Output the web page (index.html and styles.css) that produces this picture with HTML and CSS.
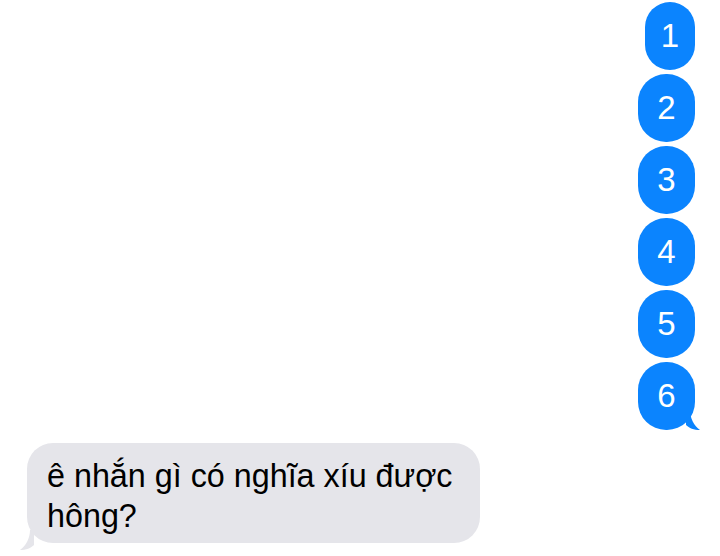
FILE: index.html
```html
<!DOCTYPE html>
<html lang="vi">
<head>
    <meta charset="UTF-8">
    <meta name="viewport" content="width=device-width, initial-scale=1.0">
    <title>Tin nhắn</title>
    <link rel="stylesheet" href="styles.css">
</head>
<body>

<div class="thread">
    <!-- Sent messages -->
    <div class="sent">
        <div class="bubble out narrow">1</div>
        <div class="bubble out">2</div>
        <div class="bubble out">3</div>
        <div class="bubble out">4</div>
        <div class="bubble out">5</div>
        <div class="bubble out last">
            6
            <svg class="tail tail-out" width="16" height="20" viewBox="0 0 16 20">
                <path d="M0 0 L4 0 C4 8 8 16 14 20 C8 20 3 18 0 15 Z" fill="#0b84fe"/>
            </svg>
        </div>
    </div>

    <!-- Received message -->
    <div class="received">
        <div class="bubble in">
            ê nhắn gì có nghĩa xíu được hông?
            <svg class="tail tail-in" width="16" height="20" viewBox="0 0 16 20">
                <path d="M16 0 L12 0 C12 8 8 16 2 20 C8 20 13 18 16 15 Z" fill="#e5e5ea"/>
            </svg>
        </div>
    </div>
</div>

</body>
</html>
```

FILE: styles.css
```css
body {
    margin: 0;
    background: #fff;
    font-family: 'Liberation Sans', Arial, sans-serif;
    width: 720px;
    height: 556px;
    overflow: hidden;
}
.thread {
    display: flex;
    flex-direction: column;
}
.sent {
    display: flex;
    flex-direction: column;
    align-items: flex-end;
    gap: 4px;
    padding: 2px 25px 0 0;
}
.bubble {
    position: relative;
    font-size: 33px;
}
.out {
    background-color: #0b84fe;
    color: #fff;
    height: 68px;
    width: 57px;
    border-radius: 28px;
    display: flex;
    align-items: center;
    justify-content: center;
}
.out.narrow {
    width: 50px;
    border-radius: 25px;
}
.tail {
    position: absolute;
    bottom: 0;
}
.tail-out {
    right: -7px;
}
.received {
    display: flex;
    padding: 13px 0 0 27px;
}
.in {
    background-color: #e5e5ea;
    color: #000;
    font-size: 32.3px;
    width: 425px;
    padding: 13px 8px 7px 20px;
    line-height: 40px;
    border-radius: 26px;
}
.tail-in {
    left: -9px;
    bottom: -7px;
}
```
